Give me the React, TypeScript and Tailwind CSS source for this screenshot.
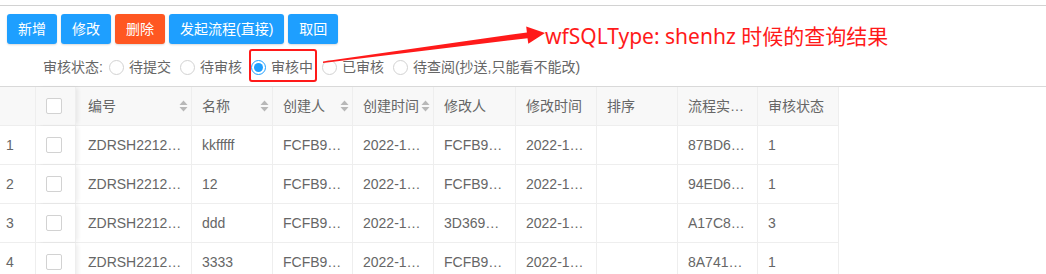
import React from 'react';

const font = 'font-["Liberation_Sans","Noto_Sans_CJK_SC",sans-serif]';

const columns = [
  { key: 'code', title: '编号', w: 'w-[116px]', sort: true },
  { key: 'name', title: '名称', w: 'w-[81px]', sort: true },
  { key: 'creator', title: '创建人', w: 'w-[80px]', sort: true },
  { key: 'created', title: '创建时间', w: 'w-[81px]', sort: true },
  { key: 'editor', title: '修改人', w: 'w-[82px]', sort: false },
  { key: 'edited', title: '修改时间', w: 'w-[81px]', sort: false },
  { key: 'order', title: '排序', w: 'w-[81px]', sort: false },
  { key: 'flow', title: '流程实…', w: 'w-[80px]', sort: false },
  { key: 'status', title: '审核状态', w: 'w-[81px]', sort: false },
];

const rows: Record<string, string>[] = [
  { code: 'ZDRSH2212…', name: 'kkfffff', creator: 'FCFB9…', created: '2022-1…', editor: 'FCFB9…', edited: '2022-1…', order: '', flow: '87BD6…', status: '1' },
  { code: 'ZDRSH2212…', name: '12', creator: 'FCFB9…', created: '2022-1…', editor: 'FCFB9…', edited: '2022-1…', order: '', flow: '94ED6…', status: '1' },
  { code: 'ZDRSH2212…', name: 'ddd', creator: 'FCFB9…', created: '2022-1…', editor: '3D369…', edited: '2022-1…', order: '', flow: 'A17C8…', status: '3' },
  { code: 'ZDRSH2212…', name: '3333', creator: 'FCFB9…', created: '2022-1…', editor: 'FCFB9…', edited: '2022-1…', order: '', flow: '8A741…', status: '1' },
];

const radios = ['待提交', '待审核', '审核中', '已审核', '待查阅(抄送,只能看不能改)'];

const SortIcon = () => (
  <svg width="9" height="12" viewBox="0 0 9 12" className="shrink-0">
    <path d="M4.5 0.5 L8.5 5 L0.5 5 Z" fill="#b8b8b8" />
    <path d="M0.5 7 L8.5 7 L4.5 11.5 Z" fill="#b8b8b8" />
  </svg>
);

const Checkbox = () => (
  <span className="block w-[16px] h-[16px] border border-[#d2d2d2] rounded-[2px] bg-white" />
);

const Btn = ({ label, danger }: { label: string; danger?: boolean }) => (
  <button
    className={`h-[30px] px-[11px] rounded-[3px] text-white text-[14px] shadow-[0_1px_2px_rgba(0,0,0,0.15)] ${
      danger ? 'bg-[#ff5722]' : 'bg-[#1e9fff]'
    }`}
  >
    {label}
  </button>
);

export default function App() {
  return (
    <div className={`relative w-[1046px] h-[274px] overflow-hidden bg-white pt-[5px] ${font}`}>
      <div className="border-t border-[#d2d2d2]">
        {/* toolbar */}
        <div className="flex gap-[4px] pl-[7px] pt-[8px]">
          <Btn label="新增" />
          <Btn label="修改" />
          <Btn label="删除" danger />
          <Btn label="发起流程(直接)" />
          <Btn label="取回" />
        </div>

        {/* status filter */}
        <div className="flex items-center h-[16px] mt-[15px] pl-[43px] text-[14px] text-[#666]">
          <span className="mr-[6px]">审核状态:</span>
          {radios.map((r, i) => (
            <label key={r} className="flex items-center mr-[9px]">
              {i === 2 ? (
                <span className="flex items-center justify-center w-[15px] h-[15px] rounded-full border border-[#1e9fff] bg-white mr-[5px]">
                  <span className="w-[9px] h-[9px] rounded-full bg-[#1e9fff]" />
                </span>
              ) : (
                <span className="w-[15px] h-[15px] rounded-full border border-[#d2d2d2] bg-white mr-[5px]" />
              )}
              <span>{r}</span>
            </label>
          ))}
        </div>

        {/* table */}
        <div className="mt-[11px] border-t border-[#d9d9d9] text-[14px] text-[#666]">
          <div className="flex h-[39px] w-[839px] bg-[#f8f8f8] border-b border-[#eee]">
            <div className="w-[36px] border-r border-[#eee]" />
            <div className="relative z-10 w-[40px] flex items-center pl-[10px] border-r border-[#eee] bg-[#f8f8f8] shadow-[3px_0_4px_-1px_rgba(0,0,0,0.07)]">
              <Checkbox />
            </div>
            {columns.map((c, i) => (
              <div
                key={c.key}
                className={`${c.w} flex items-center justify-between pr-[3px] border-r border-[#eee] ${
                  i === 0 ? 'pl-[12px]' : 'pl-[10px]'
                }`}
              >
                <span className="whitespace-nowrap">{c.title}</span>
                {c.sort && <SortIcon />}
              </div>
            ))}
          </div>
          {rows.map((row, ri) => (
            <div key={ri} className="flex h-[39px] w-[839px] bg-white border-b border-[#eee]">
              <div className="w-[36px] flex items-center pl-[6px] border-r border-[#eee]">{ri + 1}</div>
              <div className="relative z-10 w-[40px] flex items-center pl-[10px] border-r border-[#eee] bg-white shadow-[3px_0_4px_-1px_rgba(0,0,0,0.07)]">
                <Checkbox />
              </div>
              {columns.map((c, i) => (
                <div
                  key={c.key}
                  className={`${c.w} flex items-center border-r border-[#eee] whitespace-nowrap overflow-hidden ${
                    i === 0 ? 'pl-[12px]' : 'pl-[10px]'
                  }`}
                >
                  {row[c.key]}
                </div>
              ))}
            </div>
          ))}
        </div>
      </div>

      {/* annotation: highlight box */}
      <div className="absolute left-[249px] top-[49px] w-[68px] h-[33px] border-2 border-[#ff1a1a] rounded-[3px]" />

      {/* annotation: arrow */}
      <svg className="absolute left-0 top-0" width="1046" height="274" viewBox="0 0 1046 274">
        <polygon
          points="323,61.4 526.9,32.4 526.2,26.4 545,33 528.3,43.8 527.5,38.2 323,63"
          fill="#ff1a1a"
        />
      </svg>

      {/* annotation: text */}
      <div className="absolute left-[545px] top-[22px] text-[21px] leading-[28px] text-[#ff1a1a] whitespace-nowrap font-['Noto_Sans','Noto_Sans_CJK_SC',sans-serif]">
        wfSQLType: shenhz 时候的查询结果
      </div>
    </div>
  );
}
